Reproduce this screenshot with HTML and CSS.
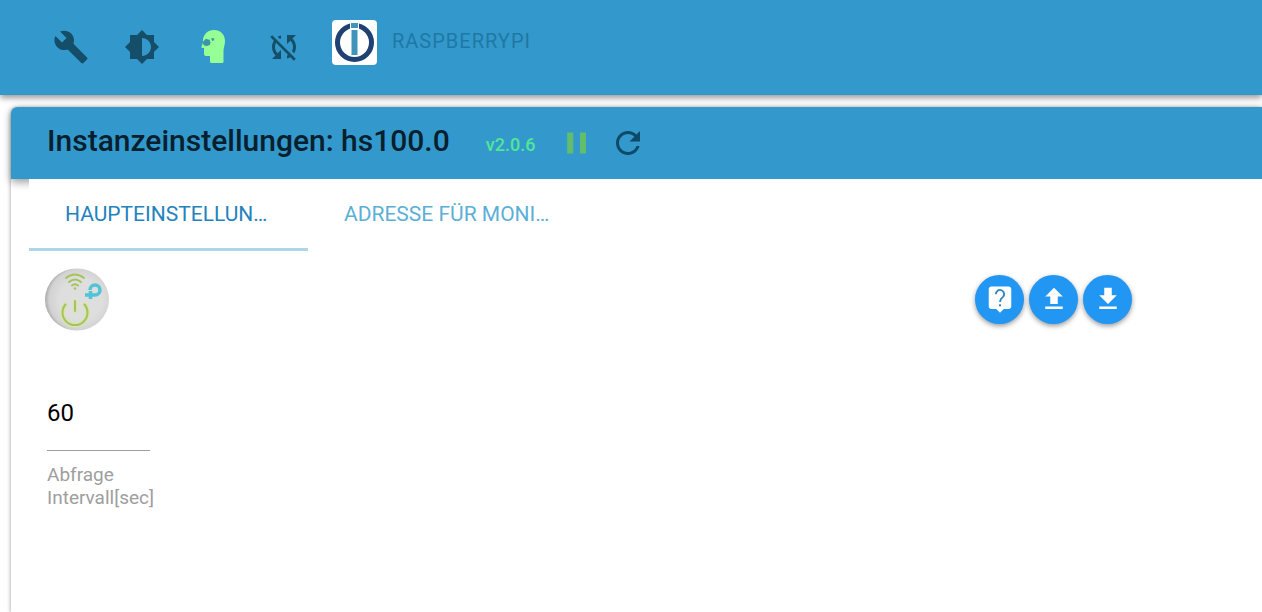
FILE: index.html
```
<!DOCTYPE html>
<html lang="de">
<head>
    <meta charset="UTF-8">
    <meta name="viewport" content="width=device-width, initial-scale=1.0">
    <title>Instanzeinstellungen: hs100.0</title>
    <link rel="stylesheet" href="styles.css">
</head>
<body>
    <header class="topbar">
        <button class="icon-button" type="button" aria-label="Einstellungen">
            <svg class="icon" viewBox="0 0 24 24"><path d="M22.7 19l-9.1-9.1c.9-2.3.4-5-1.5-6.9-2-2-5-2.4-7.4-1.3L9 6 6 9 1.6 4.7C.4 7.1.9 10.1 2.9 12.1c1.9 1.9 4.6 2.4 6.9 1.5l9.1 9.1c.4.4 1 .4 1.4 0l2.3-2.3c.5-.4.5-1.1.1-1.4z"/></svg>
        </button>
        <button class="icon-button" type="button" aria-label="Farbschema">
            <svg class="icon" viewBox="0 0 24 24"><path d="M20 15.31L23.31 12 20 8.69V4h-4.69L12 .69 8.69 4H4v4.69L.69 12 4 15.31V20h4.69L12 23.31 15.31 20H20v-4.69zM12 18V6c3.31 0 6 2.69 6 6s-2.69 6-6 6z"/></svg>
        </button>
        <button class="icon-button expert" type="button" aria-label="Expertenmodus">
            <svg class="icon" viewBox="0 0 36 36">
                <path d="M8 11C8.500 5 13 1 19 1c6.500 0 11 4.500 11 11 0 4-1.500 6.500-1.500 10v10.500q0 1.500-1.500 1.500H16.500q-1.500 0-1.500-1.500V27h-4q-2 0-2-2v-6H7.500q-1.500 0-1-1.500l1.500-4z"/>
                <path class="eye" d="M10 10.500l1.500-.8 1.500.8 1.800.2.200 1.800.8 1-.8 1.200-.2 1.600-1.800.2-1.500.8-1.300-.8-1.700-.2-.2-1.600-.8-1.200.8-1zM16 9.200h3.500l-1 2.600-1.200.2z"/>
            </svg>
        </button>
        <button class="icon-button" type="button" aria-label="Synchronisierung aus">
            <svg class="icon" viewBox="0 0 24 24"><path d="M10 6.350V4.260c-.8.21-1.550.54-2.230.96l1.460 1.460c.25-.12.5-.24.77-.33zm-7.140-.94l2.360 2.360C4.450 8.990 4 10.440 4 12c0 2.210.91 4.200 2.360 5.640L4 20h6v-6l-2.240 2.240C6.680 15.150 6 13.660 6 12c0-1 .25-1.940.68-2.770l8.080 8.080c-.25.13-.5.25-.77.34v2.090c.8-.21 1.550-.54 2.230-.96l2.360 2.360 1.270-1.270L4.140 4.140 2.860 5.410zM20 4h-6v6l2.240-2.240C17.320 8.850 18 10.340 18 12c0 1-.25 1.940-.68 2.770l1.460 1.460C19.550 15.010 20 13.560 20 12c0-2.210-.91-4.200-2.360-5.640L20 4z"/></svg>
        </button>
        <div class="host">
            <svg class="host-logo" viewBox="0 0 45 45">
                <rect width="45" height="45" rx="4" fill="#fff"/>
                <circle cx="22.5" cy="22.500" r="17" fill="none" stroke="#1f4173" stroke-width="5"/>
                <path fill="#fff" d="M18 1h9v9h-9z"/>
                <path fill="#4093b9" d="M19 3h7v5h-7zM19.500 10h6v25h-6z"/>
            </svg>
            <span class="host-name">RASPBERRYPI</span>
        </div>
    </header>

    <main class="panel">
        <div class="panel-header">
            <h1 class="title">Instanzeinstellungen: hs100.0</h1>
            <span class="version">v2.0.6</span>
            <button class="tool pause" type="button" aria-label="Pause">
                <svg class="icon" viewBox="0 0 24 24"><path d="M5.500 5h4v14h-4zM14 5h4v14h-4z"/></svg>
            </button>
            <button class="tool" type="button" aria-label="Neu laden">
                <svg class="icon" viewBox="0 0 24 24"><path d="M17.650 6.350C16.200 4.900 14.210 4 12 4c-4.420 0-7.990 3.580-7.990 8s3.570 8 7.990 8c3.730 0 6.840-2.550 7.730-6h-2.080c-.82 2.330-3.040 4-5.650 4-3.310 0-6-2.690-6-6s2.690-6 6-6c1.660 0 3.140.69 4.220 1.780L13 11h7V4l-2.350 2.350z"/></svg>
            </button>
        </div>

        <div class="panel-body">
            <nav class="tabs">
                <a class="tab active" href="#main">HAUPTEINSTELLUN…</a>
                <a class="tab" href="#monitor">ADRESSE FÜR MONI…</a>
            </nav>

            <section class="content" id="main">
                <div class="adapter-row">
                    <svg class="adapter-logo" viewBox="0 0 66 64">
                        <defs>
                            <radialGradient id="disc" cx="56%" cy="50%" r="55%">
                                <stop offset="0.6" stop-color="#dedede"/>
                                <stop offset="0.9" stop-color="#d2d2d2"/>
                                <stop offset="1" stop-color="#b0b0b0"/>
                            </radialGradient>
                        </defs>
                        <ellipse cx="33" cy="32.500" rx="32" ry="31" fill="url(#disc)"/>
                        <g fill="none" stroke="#d9e3b4" stroke-width="5" stroke-linecap="round">
                            <path d="M21.500 37.500a12.500 12.500 0 1 0 19 0M31 35v9"/>
                        </g>
                        <g fill="none" stroke="#a4c458" stroke-width="2" stroke-linecap="round">
                            <path d="M22 11q9-7 18 0M25 15q6-5 12 0M28 18.500q3-2.500 6 0"/>
                            <path d="M21.500 37.500a12.500 12.500 0 1 0 19 0M31 34v10"/>
                        </g>
                        <circle cx="31" cy="21.500" r="1.300" fill="#a4c458"/>
                        <path d="M46 23a5 5 0 1 1 5 5H41M46.500 24v8" fill="none" stroke="#50c5d5" stroke-width="3.600"/>
                    </svg>
                    <div class="actions">
                        <button class="fab" type="button" aria-label="Hilfe">
                            <svg class="icon" viewBox="0 0 24 24">
                                <path d="M19 2H5c-1.100 0-2 .9-2 2v14c0 1.100.9 2 2 2h4l3 3 3-3h4c1.100 0 2-.9 2-2V4c0-1.100-.9-2-2-2z"/>
                                <path class="mark" d="M8.700 8.200a3.300 3.300 0 1 1 5.500 2.300C12.700 11.700 12 12.400 12 14.300M12 16.200v1.600"/>
                            </svg>
                        </button>
                        <button class="fab" type="button" aria-label="Hochladen">
                            <svg class="icon" viewBox="0 0 24 24"><path d="M5 20h14v-2H5v2zm0-10h4v6h6v-6h4l-7-7-7 7z"/></svg>
                        </button>
                        <button class="fab" type="button" aria-label="Herunterladen">
                            <svg class="icon" viewBox="0 0 24 24"><path d="M5 20h14v-2H5v2zM19 9h-4V3H9v6H5l7 7 7-7z"/></svg>
                        </button>
                    </div>
                </div>

                <div class="field">
                    <input class="field-input" id="interval" type="text" inputmode="numeric" value="60">
                    <label class="field-label" for="interval">Abfrage<br>Intervall[sec]</label>
                </div>
            </section>
        </div>
    </main>
</body>
</html>
```
FILE: styles.css
```
* {
    margin: 0;
    padding: 0;
    box-sizing: border-box;
}

body {
    background: #fff;
    display: flex;
    flex-direction: column;
    min-height: 100vh;
    overflow-x: hidden;
    font-family: Roboto, sans-serif;
}

button {
    border: none;
    background: none;
    color: inherit;
    cursor: pointer;
    display: flex;
    align-items: center;
    justify-content: center;
}

.icon {
    width: 36px;
    height: 36px;
    fill: currentColor;
}

/* top bar */
.topbar {
    display: flex;
    align-items: center;
    height: 95px;
    padding: 0 0 2px 35px;
    background: #3399cc;
    color: #144e68;
    box-shadow: 0 3px 6px rgba(0, 0, 0, 0.4);
}

.icon-button {
    width: 71px;
    height: 72px;
}

.expert {
    color: #96ff96;
}

.eye {
    fill: #3d94a8;
}

.host {
    display: flex;
    align-items: center;
    align-self: flex-start;
    gap: 15px;
    margin-left: 13px;
    padding-top: 20px;
}

.host-logo {
    width: 45px;
    height: 45px;
}

.host-name {
    font-size: 20px;
    line-height: 24px;
    letter-spacing: 1px;
    color: #1f78a3;
    padding-bottom: 4px;
}

/* instance panel */
.panel {
    flex: 1;
    display: flex;
    flex-direction: column;
    margin: 12px 0 0 11px;
    border-radius: 6px 0 0 0;
    box-shadow: 0 1px 4px rgba(0, 0, 0, 0.4);
}

.panel-header {
    display: flex;
    align-items: center;
    height: 72px;
    padding-left: 36px;
    background: #3399cc;
    border-radius: 6px 0 0 0;
    color: #0c4a68;
    box-shadow: 0 3px 8px rgba(0, 0, 0, 0.4);
}

.title {
    font-size: 30px;
    font-weight: 500;
    line-height: 36px;
    color: #071f2e;
    padding-bottom: 4px;
}

.version {
    margin: 2px 24px 0 36px;
    font-size: 18px;
    font-weight: 500;
    color: #50e696;
}

.tool {
    width: 36px;
    height: 36px;
    margin-right: 15px;
}

.pause {
    color: #62be6b;
}

.panel-body {
    flex: 1;
    position: relative;
    margin-left: 18px;
    background: #fff;
}

.tabs {
    display: flex;
}

.tab {
    width: 279px;
    height: 72px;
    padding: 0 36px;
    font-size: 21px;
    line-height: 70px;
    white-space: nowrap;
    text-decoration: none;
    color: #5cafd6;
    border-bottom: 3px solid transparent;
}

.tab.active {
    color: #2283be;
    border-bottom-color: #add5eb;
}

.content {
    padding: 16px 130px 0 15px;
}

.adapter-row {
    display: flex;
    align-items: center;
    justify-content: space-between;
}

.adapter-logo {
    width: 66px;
    height: 64px;
}

.actions {
    display: flex;
    gap: 5px;
}

.fab {
    width: 49px;
    height: 49px;
    border-radius: 50%;
    background: #2196f3;
    color: #fff;
    box-shadow: 0 2px 5px rgba(0, 0, 0, 0.4);
}

.fab .icon {
    width: 30px;
    height: 30px;
}

.mark {
    fill: none;
    stroke: #2d86bd;
    stroke-width: 1.5;
}

.field {
    display: flex;
    flex-direction: column;
    width: 108px;
    margin: 44px 0 0 3px;
}

.field-input {
    width: 103px;
    height: 76px;
    border: none;
    border-bottom: 1px solid #9e9e9e;
    background: none;
    outline: none;
    font-family: inherit;
    font-size: 24px;
    color: #000;
}

.field-label {
    margin-top: 12px;
    font-size: 19px;
    line-height: 23px;
    color: #9e9e9e;
}
```
